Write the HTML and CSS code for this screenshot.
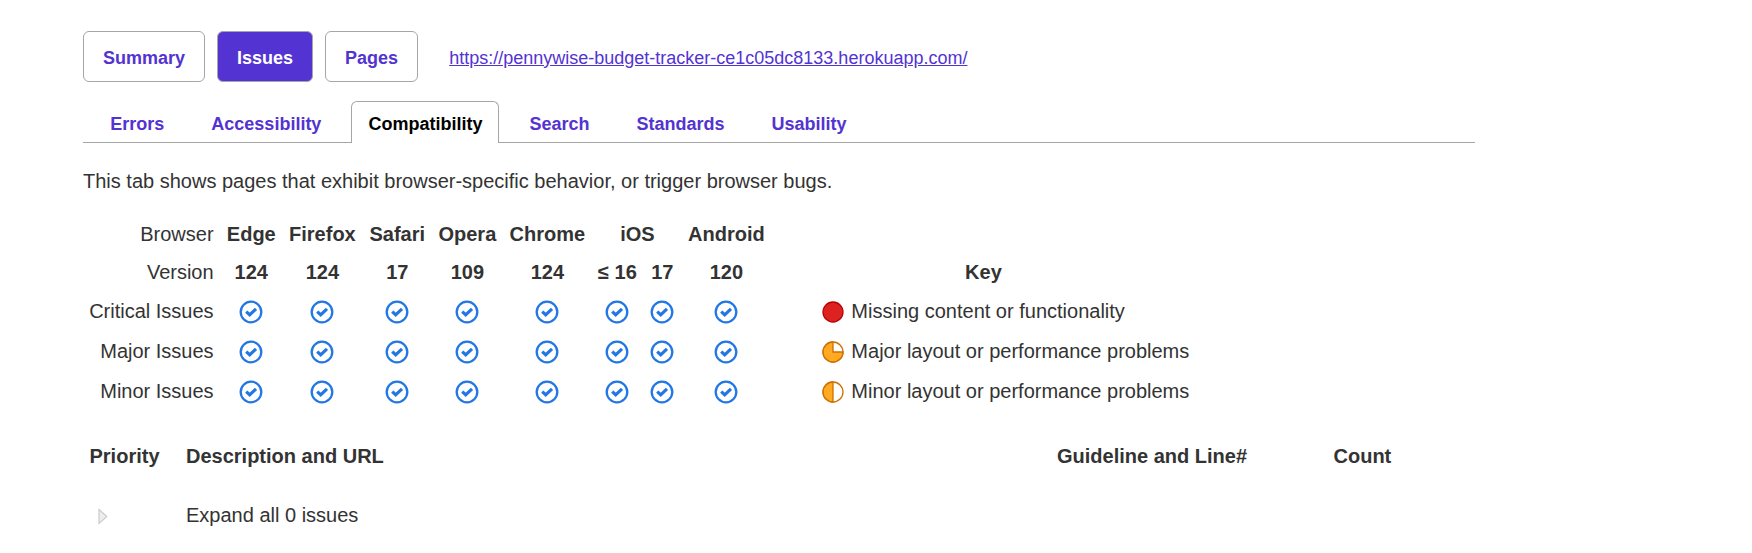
FILE: index.html
```html
<!DOCTYPE html>
<html lang="en">
<head>
<meta charset="utf-8">
<title>Compatibility issues</title>
<link rel="stylesheet" href="styles.css">
</head>
<body>
<svg class="defs" aria-hidden="true">
  <symbol id="ok" viewBox="0 0 24 24">
    <circle cx="12" cy="12" r="10.3" fill="none" stroke="#2277e3" stroke-width="2.3"/>
    <path d="M7.2 11.6 10.7 14.8 17 8.9" fill="none" stroke="#2277e3" stroke-width="3.2"/>
  </symbol>
</svg>
<main class="report">
  <nav class="views">
    <a class="view">Summary</a>
    <a class="view view-active">Issues</a>
    <a class="view">Pages</a>
    <a class="site" href="#">https://pennywise-budget-tracker-ce1c05dc8133.herokuapp.com/</a>
  </nav>
  <nav class="tabs">
    <a class="tab">Errors</a>
    <a class="tab">Accessibility</a>
    <a class="tab tab-active">Compatibility</a>
    <a class="tab">Search</a>
    <a class="tab">Standards</a>
    <a class="tab">Usability</a>
  </nav>
  <p class="intro">This tab shows pages that exhibit browser-specific behavior, or trigger browser bugs.</p>
  <section class="overview">
    <div class="matrix">
      <span class="label">Browser</span><b>Edge</b><b>Firefox</b><b>Safari</b><b>Opera</b><b>Chrome</b><b class="wide">iOS</b><b>Android</b>
      <span class="label">Version</span><b>124</b><b>124</b><b>17</b><b>109</b><b>124</b><b>≤ 16</b><b>17</b><b>120</b>
      <span class="label">Critical Issues</span>
      <svg class="ok"><use href="#ok"/></svg><svg class="ok"><use href="#ok"/></svg><svg class="ok"><use href="#ok"/></svg><svg class="ok"><use href="#ok"/></svg><svg class="ok"><use href="#ok"/></svg><svg class="ok"><use href="#ok"/></svg><svg class="ok"><use href="#ok"/></svg><svg class="ok"><use href="#ok"/></svg>
      <span class="label">Major Issues</span>
      <svg class="ok"><use href="#ok"/></svg><svg class="ok"><use href="#ok"/></svg><svg class="ok"><use href="#ok"/></svg><svg class="ok"><use href="#ok"/></svg><svg class="ok"><use href="#ok"/></svg><svg class="ok"><use href="#ok"/></svg><svg class="ok"><use href="#ok"/></svg><svg class="ok"><use href="#ok"/></svg>
      <span class="label">Minor Issues</span>
      <svg class="ok"><use href="#ok"/></svg><svg class="ok"><use href="#ok"/></svg><svg class="ok"><use href="#ok"/></svg><svg class="ok"><use href="#ok"/></svg><svg class="ok"><use href="#ok"/></svg><svg class="ok"><use href="#ok"/></svg><svg class="ok"><use href="#ok"/></svg><svg class="ok"><use href="#ok"/></svg>
    </div>
    <div class="key">
      <b class="key-title">Key</b>
      <div class="key-row"><svg class="dot" viewBox="0 0 22 22"><circle cx="11" cy="11" r="10" fill="#dd2222" stroke="#bb0000" stroke-width="1.3"/></svg><span>Missing content or functionality</span></div>
      <div class="key-row"><svg class="dot" viewBox="0 0 22 22"><circle cx="11" cy="11" r="10" fill="#fff" stroke="#cc7000" stroke-width="1.3"/><path d="M11 1V11H21A10 10 0 1 1 11 1Z" fill="#ffaa22" stroke="#cc7000" stroke-width="1.3"/></svg><span>Major layout or performance problems</span></div>
      <div class="key-row"><svg class="dot" viewBox="0 0 22 22"><circle cx="11" cy="11" r="10" fill="#fff" stroke="#cc7000" stroke-width="1.3"/><path d="M11 1V21A10 10 0 0 1 11 1Z" fill="#ffaa22" stroke="#cc7000" stroke-width="1.3"/></svg><span>Minor layout or performance problems</span></div>
    </div>
  </section>
  <section class="issues">
    <b>Priority</b><b>Description and URL</b><b>Guideline and Line#</b><b>Count</b>
    <svg class="arrow" viewBox="0 0 10 17"><path d="M1 1.5 8.8 8.5 1 15.5Z" fill="#eee" stroke="#ccc" stroke-width="1.2"/></svg><span>Expand all 0 issues</span>
  </section>
</main>
</body>
</html>
```
FILE: styles.css
```css
* { box-sizing: border-box; }
body {
  margin: 0;
  background: #fff;
  color: #333;
  font: 20px/24px "Liberation Sans", Arial, sans-serif;
}
.defs { display: none; }
.report { width: 1392px; margin-left: 83px; padding-top: 31px; }
.views { display: flex; align-items: center; gap: 12px; font-size: 18px; }
.view {
  height: 51px;
  padding: 3px 19px 0;
  border: 1px solid #a6a6a6;
  border-radius: 6px;
  color: #5333d1;
  font-weight: bold;
  line-height: 47px;
}
.view-active { background: #5333d1; color: #fff; }
.site { margin-left: 19px; padding-top: 2px; color: #5333d1; }
.tabs {
  display: flex;
  gap: 13px;
  height: 42px;
  margin-top: 19px;
  padding-left: 10.3px;
  border-bottom: 1px solid #a6a6a6;
  font-size: 18px;
  font-weight: bold;
}
.tab {
  height: 42px;
  padding: 0 16px;
  border: 1px solid transparent;
  border-bottom: 0;
  border-radius: 6px 6px 0 0;
  color: #5333d1;
  line-height: 44px;
}
.tab-active { border-color: #a6a6a6; background: #fff; color: #000; }
.intro { margin: 26px 0 0; }
.overview { display: flex; margin-top: 22px; }
.matrix {
  display: grid;
  grid-template-columns: 137px 62.6px 79.6px 70.2px 70px 90px 50px 40px 88px;
  grid-template-rows: 38px 38px 40px 40px 40px;
  align-items: center;
  justify-items: center;
  white-space: nowrap;
}
.label { justify-self: end; padding-right: 6.4px; }
.wide { grid-column: span 2; }
.ok { width: 24px; height: 24px; margin-top: 2px; }
.key { width: 335px; margin: 38px 0 0 45.6px; white-space: nowrap; }
.key-title { display: block; line-height: 38px; text-align: center; }
.key-row { display: flex; align-items: center; gap: 7px; height: 40px; padding-left: 6.4px; }
.dot { width: 22px; height: 22px; margin-top: 2px; flex: none; }
.issues {
  display: grid;
  grid-template-columns: 96.5px 871px 276.5px 1fr;
  row-gap: 35px;
  margin-top: 33px;
  padding-left: 6.5px;
}
.arrow { width: 10px; height: 17px; margin: 5px 0 0 8.5px; }
```
